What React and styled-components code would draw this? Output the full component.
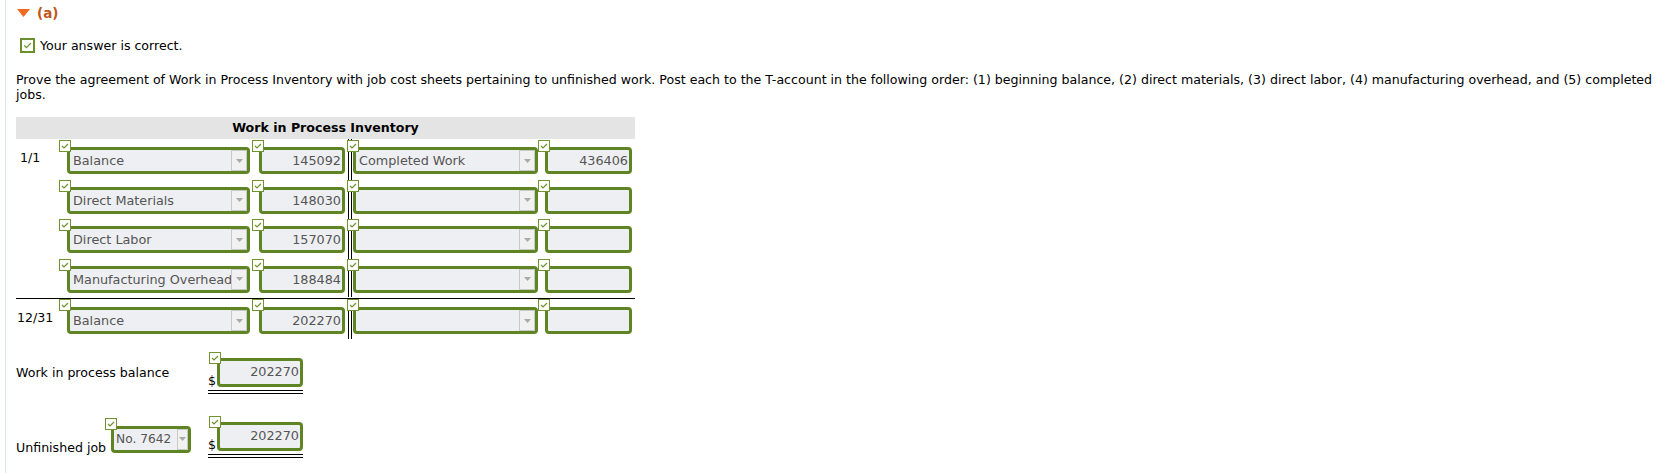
import React from 'react';
import styled, { createGlobalStyle } from 'styled-components';

const Global = createGlobalStyle`
  html, body { margin: 0; padding: 0; background: #fff; }
  body {
    font-family: "DejaVu Sans", Verdana, sans-serif;
    font-size: 12.6px;
    color: #000;
  }
`;

const GREEN = '#5f8424';

const Page = styled.div`
  margin-left: 5px;
  border-left: 1px solid #dfe5ec;
  min-height: 473px;
  padding-left: 10px;
  box-sizing: border-box;
`;

const PartHeader = styled.div`
  display: flex;
  align-items: center;
  height: 26px;
  gap: 7px;
  padding-left: 1px;
`;

const PartLabel = styled.span`
  font-weight: bold;
  font-size: 13.5px;
  color: #c0581c;
`;

const CorrectRow = styled.div`
  display: flex;
  align-items: center;
  height: 15px;
  margin-top: 12px;
  padding-left: 4px;
  gap: 5px;
`;

const BigCheck = styled.span`
  width: 15px;
  height: 15px;
  box-sizing: border-box;
  border: 2px solid #6b8f2c;
  background: #fff;
  display: flex;
  align-items: center;
  justify-content: center;
`;

const Prompt = styled.p`
  margin: 19px 4px 0 0;
  line-height: 15px;
`;

const Table = styled.div`
  width: 619px;
  margin-top: 15px;
`;

const TableHeader = styled.div`
  height: 22px;
  line-height: 22px;
  background: #e4e4e4;
  font-weight: bold;
  text-align: center;
`;

const Row = styled.div`
  display: grid;
  grid-template-columns: 43px 193px 96px 5px 185px 97px;
  height: 39.5px;
  ${(p) => (p.$ruled ? 'border-top: 1px solid #000; margin-top: 1px;' : '')}
`;

const DateCell = styled.div`
  padding: 11px 0 0 ${(p) => p.$indent}px;
  line-height: 15px;
`;

const Cell = styled.div`
  position: relative;
  padding-top: 8px;
  padding-left: ${(p) => p.$inset}px;
`;

const Divider = styled.div`
  background: linear-gradient(to right, #000 0 1px, #fff 1px 3px, #000 3px 4px, #fff 4px);
`;

const Badge = styled.span`
  position: absolute;
  top: ${(p) => p.$top ?? 1}px;
  left: ${(p) => p.$left}px;
  width: 12px;
  height: 12px;
  box-sizing: border-box;
  border: 1px solid #6e9330;
  background: #fff;
  display: flex;
  align-items: center;
  justify-content: center;
  z-index: 1;
`;

const SelectBox = styled.div`
  width: ${(p) => p.$w}px;
  height: 27px;
  box-sizing: border-box;
  border: 3px solid ${GREEN};
  border-radius: 4px;
  background: #eeeff2;
  display: flex;
  align-items: center;
  padding-left: ${(p) => (p.$compact ? 2 : 3)}px;
  color: #555;
  font-size: ${(p) => (p.$compact ? 12.2 : 12.8)}px;
  white-space: nowrap;
  overflow: hidden;
`;

const SelectText = styled.span`
  flex: 1;
  overflow: hidden;
`;

const ArrowButton = styled.span`
  width: ${(p) => (p.$compact ? 11 : 16)}px;
  height: 100%;
  box-sizing: border-box;
  border: 1px solid #c9c9c9;
  background: #f1f1f1;
  display: flex;
  align-items: center;
  justify-content: center;
  flex: none;
`;

const AmountBox = styled.div`
  width: ${(p) => p.$w}px;
  height: ${(p) => p.$h ?? 27}px;
  box-sizing: border-box;
  border: 3px solid ${GREEN};
  border-radius: 4px;
  background: #eeeff2;
  display: flex;
  align-items: ${(p) => (p.$top ? 'flex-start' : 'center')};
  padding-top: ${(p) => (p.$top ? 3 : 0)}px;
  justify-content: flex-end;
  padding-right: 1px;
  color: #555;
  font-size: 12.8px;
`;

const BalanceRow = styled.div`
  display: flex;
  align-items: ${(p) => (p.$bottom ? 'flex-end' : 'center')};
  margin-top: ${(p) => p.$top}px;
`;

const LabelCol = styled.div`
  width: 192px;
  display: flex;
  align-items: flex-end;
  gap: 5px;
`;

const Label = styled.span`
  line-height: 15px;
  margin-bottom: ${(p) => p.$mb ?? 0}px;
`;

const SmallSelectWrap = styled.div`
  position: relative;
  margin-bottom: 5px;
`;

const TotalGroup = styled.div`
  position: relative;
  width: 95px;
  display: flex;
  align-items: flex-end;
  padding: 6px 0 3px;
  border-bottom: 4px double #000;
`;

const Dollar = styled.span`
  width: 9px;
  line-height: 12px;
`;

const Check = ({ size = 8 }) => (
  <svg width={size} height={size * 0.75} viewBox="0 0 8 6">
    <polyline points="1,3 3,5 7,1" fill="none" stroke="#6e9330" strokeWidth="1.2" />
  </svg>
);

const Arrow = () => (
  <svg width="7" height="4" viewBox="0 0 7 4">
    <polygon points="0,0 7,0 3.5,4" fill="#a9a9a9" />
  </svg>
);

const Select = ({ w, compact, children }) => (
  <SelectBox $w={w} $compact={compact}>
    <SelectText>{children}</SelectText>
    <ArrowButton $compact={compact}>
      <Arrow />
    </ArrowButton>
  </SelectBox>
);

const rows = [
  { date: '1/1', indent: 4, acct: 'Balance', amt: '145092', racct: 'Completed Work', ramt: '436406' },
  { date: '', indent: 4, acct: 'Direct Materials', amt: '148030', racct: '', ramt: '' },
  { date: '', indent: 4, acct: 'Direct Labor', amt: '157070', racct: '', ramt: '' },
  { date: '', indent: 4, acct: 'Manufacturing Overhead', amt: '188484', racct: '', ramt: '' },
  { date: '12/31', indent: 1, acct: 'Balance', amt: '202270', racct: '', ramt: '', ruled: true, top: 0 },
];

export default function App() {
  return (
    <>
      <Global />
      <Page>
        <PartHeader>
          <svg width="13" height="8" viewBox="0 0 13 8">
            <polygon points="0,0 13,0 6.5,8" fill="#f26a21" />
          </svg>
          <PartLabel>(a)</PartLabel>
        </PartHeader>
        <CorrectRow>
          <BigCheck>
            <Check size={9} />
          </BigCheck>
          <span>Your answer is correct.</span>
        </CorrectRow>
        <Prompt>
          Prove the agreement of Work in Process Inventory with job cost sheets pertaining to unfinished work. Post each to the T-account in the following order: (1) beginning balance, (2) direct materials, (3) direct labor, (4) manufacturing overhead, and (5) completed jobs.
        </Prompt>
        <Table>
          <TableHeader>Work in Process Inventory</TableHeader>
          {rows.map((r, i) => (
            <Row key={i} $ruled={r.ruled}>
              <DateCell $indent={r.indent}>{r.date}</DateCell>
              <Cell $inset={8}>
                <Badge $left={0} $top={r.top}><Check /></Badge>
                <Select w={183}>{r.acct}</Select>
              </Cell>
              <Cell $inset={7}>
                <Badge $left={0} $top={r.top}><Check /></Badge>
                <AmountBox $w={86}>{r.amt}</AmountBox>
              </Cell>
              <Divider />
              <Cell $inset={0}>
                <Badge $left={-6} $top={r.top}><Check /></Badge>
                <Select w={185}>{r.racct}</Select>
              </Cell>
              <Cell $inset={7}>
                <Badge $left={0} $top={r.top}><Check /></Badge>
                <AmountBox $w={87}>{r.ramt}</AmountBox>
              </Cell>
            </Row>
          ))}
        </Table>

        <BalanceRow $top={13}>
          <LabelCol>
            <Label>Work in process balance</Label>
          </LabelCol>
          <TotalGroup>
            <Badge $left={1} $top={0}><Check /></Badge>
            <Dollar>$</Dollar>
            <AmountBox $w={86} $h={29} $top>202270</AmountBox>
          </TotalGroup>
        </BalanceRow>

        <BalanceRow $top={22} $bottom>
          <LabelCol>
            <Label $mb={3}>Unfinished job</Label>
            <SmallSelectWrap>
              <Badge $left={-6} $top={-8}><Check /></Badge>
              <Select w={80} compact>No. 7642</Select>
            </SmallSelectWrap>
          </LabelCol>
          <TotalGroup>
            <Badge $left={1} $top={0}><Check /></Badge>
            <Dollar>$</Dollar>
            <AmountBox $w={86} $h={29} $top>202270</AmountBox>
          </TotalGroup>
        </BalanceRow>
      </Page>
    </>
  );
}
